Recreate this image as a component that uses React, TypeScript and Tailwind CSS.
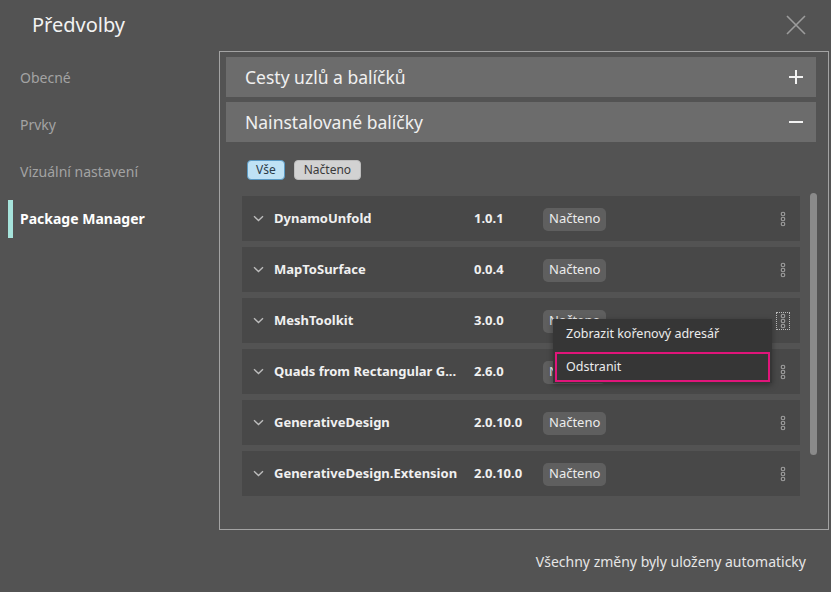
import React from "react";

const font = { fontFamily: '"Noto Sans", "Open Sans", Arial, sans-serif' };

const packages = [
  { name: "DynamoUnfold", version: "1.0.1" },
  { name: "MapToSurface", version: "0.0.4" },
  { name: "MeshToolkit", version: "3.0.0", focused: true },
  { name: "Quads from Rectangular G...", version: "2.6.0" },
  { name: "GenerativeDesign", version: "2.0.10.0" },
  { name: "GenerativeDesign.Extension", version: "2.0.10.0" },
];

function Chevron() {
  return (
    <svg width="11" height="7" viewBox="0 0 11 7" className="shrink-0">
      <path d="M1 1.2 L5.5 5.5 L10 1.2" fill="none" stroke="#bdbdbd" strokeWidth="1.4" />
    </svg>
  );
}

function Kebab() {
  return (
    <svg width="8" height="16" viewBox="0 0 8 16">
      <circle cx="4" cy="3" r="1.8" fill="none" stroke="#a0a0a0" strokeWidth="1.1" />
      <circle cx="4" cy="8" r="1.8" fill="none" stroke="#a0a0a0" strokeWidth="1.1" />
      <circle cx="4" cy="13" r="1.8" fill="none" stroke="#a0a0a0" strokeWidth="1.1" />
    </svg>
  );
}

export default function App() {
  return (
    <div className="relative w-[831px] h-[592px] bg-[#535353] overflow-hidden text-[#e8e8e8]" style={font}>
      {/* Header */}
      <div className="h-[51px] flex items-start justify-between">
        <div className="pl-[32px] pt-[10px] text-[20px] leading-[30px] text-[#f2f2f2]">Předvolby</div>
        <svg width="20" height="20" viewBox="0 0 20 20" className="mt-[15px] mr-[25px]">
          <path d="M1 1 L19 19 M19 1 L1 19" stroke="#9c9c9c" strokeWidth="1.6" />
        </svg>
      </div>

      <div className="flex">
        {/* Sidebar */}
        <div className="w-[219px] pt-[3px] text-[14px]">
          <div className="h-[47px] flex items-center pl-[20px] text-[#a3a3a3]">Obecné</div>
          <div className="h-[47px] flex items-center pl-[20px] text-[#a3a3a3]">Prvky</div>
          <div className="h-[47px] flex items-center pl-[20px] text-[#a3a3a3]">Vizuální nastavení</div>
          <div className="h-[47px] flex items-center relative">
            <div className="absolute left-[8px] top-[5px] w-[5px] h-[38px] bg-[#a6e3db]" />
            <span className="pl-[20px] font-bold text-white">Package Manager</span>
          </div>
        </div>

        {/* Panel */}
        <div className="w-[610px] h-[479px] border border-[#a3a3a3] pl-[6px] pt-[5px] pr-[10px]">
          <div className="mr-[2px] h-[40px] bg-[#6c6c6c] flex items-center justify-between pl-[19px] pr-[12px]">
            <span className="text-[17.5px] text-[#f0f0f0]">Cesty uzlů a balíčků</span>
            <svg width="16" height="16" viewBox="0 0 16 16">
              <path d="M8 1 V15 M1 8 H15" stroke="#f2f2f2" strokeWidth="2" />
            </svg>
          </div>
          <div className="mr-[2px] mt-[5px] h-[40px] bg-[#6c6c6c] flex items-center justify-between pl-[19px] pr-[12px]">
            <span className="text-[17.5px] text-[#f0f0f0]">Nainstalované balíčky</span>
            <svg width="16" height="16" viewBox="0 0 16 16">
              <path d="M1 8 H15" stroke="#f2f2f2" strokeWidth="2" />
            </svg>
          </div>

          <div className="mt-[18px] pl-[21px] flex gap-[9px]">
            <div className="h-[20px] px-[8px] rounded-[4px] bg-[#bfe2f5] border border-[#5b9ac4] text-[#2b3b48] text-[12px] flex items-center">Vše</div>
            <div className="h-[20px] px-[9px] rounded-[4px] bg-[#d2d2d2] border border-[#bdbdbd] text-[#3a3a3a] text-[12px] flex items-center">Načteno</div>
          </div>

          <div className="mt-[13px] flex">
            <div className="pl-[16px] w-[574px] shrink-0 flex flex-col gap-[6px] pt-[3px]">
              {packages.map((p) => (
                <div key={p.name} className="h-[45px] bg-[#484848] flex items-center pl-[11px]">
                  <Chevron />
                  <span className="ml-[10px] w-[200px] font-bold text-[13px] text-[#f0f0f0] whitespace-nowrap">{p.name}</span>
                  <span className="w-[69px] font-bold text-[13px] text-[#f0f0f0]">{p.version}</span>
                  <span className="h-[23px] px-[6px] rounded-[5px] bg-[#5f5f5f] text-[13px] text-[#ececec] flex items-center mt-[1px]">Načteno</span>
                  <div className="ml-auto mr-[10px] flex items-center justify-center">
                    {p.focused ? (
                      <div className="border border-dotted border-[#bbbbbb] px-[2px] flex">
                        <Kebab />
                      </div>
                    ) : (
                      <div className="px-[3px]">
                        <Kebab />
                      </div>
                    )}
                  </div>
                </div>
              ))}
            </div>
            <div className="ml-[10px] w-[7px] h-[262px] shrink-0 rounded-full bg-[#8a8a8a]" />
          </div>
        </div>
      </div>

      {/* Footer */}
      <div className="absolute right-[25px] top-[551px] text-[14px] text-[#e6e6e6]">Všechny změny byly uloženy automaticky</div>

      {/* Context menu */}
      <div className="absolute left-[553px] top-[319px] w-[219px] bg-[#363636] shadow-[0_2px_6px_rgba(0,0,0,0.35)] pb-[1px]">
        <div className="h-[31px] flex items-center pl-[13px] text-[12.5px] text-[#ececec]">Zobrazit kořenový adresář</div>
        <div className="h-[2px]" />
        <div className="mx-[2px] h-[30px] border-2 border-[#e0157a] flex items-center pl-[9px] text-[12.5px] text-[#ececec]">Odstranit</div>
      </div>
    </div>
  );
}
